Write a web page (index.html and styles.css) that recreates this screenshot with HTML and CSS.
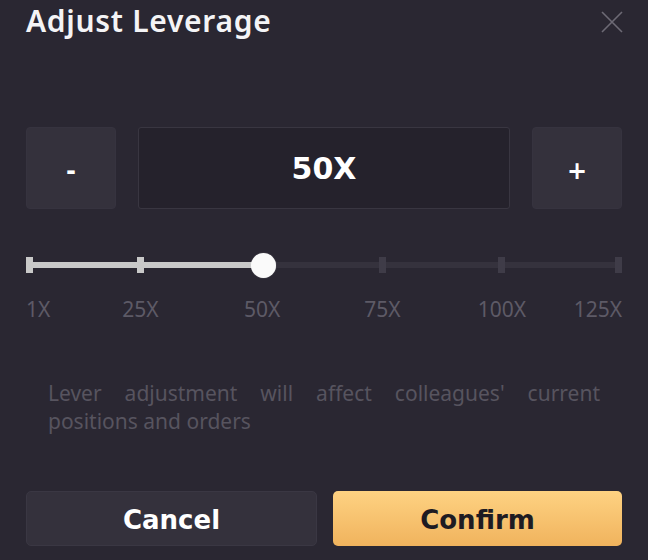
FILE: index.html
```html
<!DOCTYPE html>
<html lang="en">
<head>
<meta charset="utf-8">
<title>Adjust Leverage</title>
<link rel="stylesheet" href="styles.css">
</head>
<body>
<div class="modal">
  <div class="header">
    <h1 class="title">Adjust Leverage</h1>
    <button class="close" aria-label="Close">
      <svg width="22" height="22" viewBox="0 0 22 22"><path d="M1 1L21 21M21 1L1 21" stroke="currentColor" stroke-width="1.6" fill="none"/></svg>
    </button>
  </div>

  <div class="stepper">
    <button class="step">-</button>
    <div class="value">50X</div>
    <button class="step">+</button>
  </div>

  <div class="slider">
    <div class="rail">
      <div class="track"></div>
      <div class="fill" style="width: calc(3.5px + (100% - 7px) * 0.398)"></div>
      <span class="dot on" style="left: calc((100% - 7px) * 0)"></span>
      <span class="dot on" style="left: calc((100% - 7px) * 0.1885)"></span>
      <span class="dot on" style="left: calc((100% - 7px) * 0.398)"></span>
      <span class="dot" style="left: calc((100% - 7px) * 0.599)"></span>
      <span class="dot" style="left: calc((100% - 7px) * 0.802)"></span>
      <span class="dot" style="left: calc((100% - 7px) * 1)"></span>
      <span class="handle" style="left: calc(3.5px + (100% - 7px) * 0.398)"></span>
    </div>
    <div class="marks">
      <span class="mark first">1X</span>
      <span class="mark" style="left: calc(3.5px + (100% - 7px) * 0.1885)">25X</span>
      <span class="mark" style="left: calc(3.5px + (100% - 7px) * 0.395)">50X</span>
      <span class="mark" style="left: calc(3.5px + (100% - 7px) * 0.599)">75X</span>
      <span class="mark" style="left: calc(3.5px + (100% - 7px) * 0.802)">100X</span>
      <span class="mark last">125X</span>
    </div>
  </div>

  <p class="note">Lever adjustment will affect colleagues' current positions and orders</p>

  <div class="actions">
    <button class="btn cancel">Cancel</button>
    <button class="btn confirm">Confirm</button>
  </div>
</div>
</body>
</html>
```

FILE: styles.css
```css
* { box-sizing: border-box; }

html, body {
  margin: 0;
  padding: 0;
  background: #2a2732;
}

body {
  width: 648px;
  height: 560px;
  overflow: hidden;
  font-family: "Noto Sans", "Open Sans", sans-serif;
  color: #fff;
}

.modal {
  padding: 0 26px;
}

.header {
  display: flex;
  justify-content: space-between;
  align-items: flex-start;
  height: 46px;
}

.title {
  margin: 1px 0 0;
  font-size: 30px;
  line-height: 40px;
  font-weight: 600;
  color: #f4f4f6;
  letter-spacing: 0.7px;
}

.close {
  margin: 11px -1px 0 0;
  padding: 0;
  width: 22px;
  height: 22px;
  border: 0;
  background: none;
  color: #6d6a75;
  display: block;
}
.close svg { display: block; }

.stepper {
  margin-top: 81px;
  display: flex;
  gap: 22px;
  height: 82px;
}

.step {
  width: 90px;
  flex: none;
  border: 1px solid #36333f;
  border-radius: 4px;
  background: #34313c;
  color: #fff;
  font-family: "DejaVu Sans", sans-serif;
  font-weight: 700;
  font-size: 24px;
  padding: 5px 0 0;
  display: flex;
  align-items: center;
  justify-content: center;
}

.value {
  flex: 1;
  border: 1px solid #393641;
  border-radius: 3px;
  background: #25222c;
  display: flex;
  align-items: center;
  justify-content: center;
  font-family: "DejaVu Sans", sans-serif;
  font-weight: 700;
  font-size: 30px;
  color: #fff;
}

.slider {
  margin-top: 36px;
}

.rail {
  position: relative;
  height: 40px;
}

.track {
  position: absolute;
  left: 0;
  right: 0;
  top: 17px;
  height: 6px;
  background: #35323d;
}

.fill {
  position: absolute;
  left: 0;
  top: 17px;
  height: 6px;
  background: #c9c9c9;
}

.dot {
  position: absolute;
  top: 12px;
  width: 7px;
  height: 16px;
  background: #3f3c48;
}
.dot.on { background: #c9c9c9; }

.handle {
  position: absolute;
  top: 7.5px;
  width: 25px;
  height: 25px;
  margin-left: -12.5px;
  border-radius: 50%;
  background: #fafafa;
  box-shadow: 0 0 1px rgba(255,255,255,0.5);
}

.marks {
  position: relative;
  margin-top: 10px;
  height: 28px;
  font-size: 21px;
  line-height: 28px;
  color: #5d5a66;
}

.mark {
  position: absolute;
  top: 0;
  transform: translateX(-50%);
  white-space: nowrap;
}
.mark.first { left: 0; transform: none; }
.mark.last { right: 0; transform: none; }

.note {
  margin: 56px 0 0;
  padding: 0 22px;
  font-size: 21px;
  line-height: 28px;
  color: #57545f;
  text-align: justify;
}

.actions {
  margin-top: 56px;
  display: flex;
  gap: 16px;
}

.btn {
  flex: 1;
  height: 55px;
  border-radius: 5px;
  font-family: "DejaVu Sans", sans-serif;
  font-weight: 700;
  font-size: 26px;
  padding: 2px 0 0;
  display: flex;
  align-items: center;
  justify-content: center;
}

.cancel {
  background: #34313c;
  border: 1px solid #3a3743;
  color: #fff;
}

.confirm {
  background: linear-gradient(180deg, #fed282 0%, #f0b35d 100%);
  border: 0;
  color: #1e1b22;
}
```
